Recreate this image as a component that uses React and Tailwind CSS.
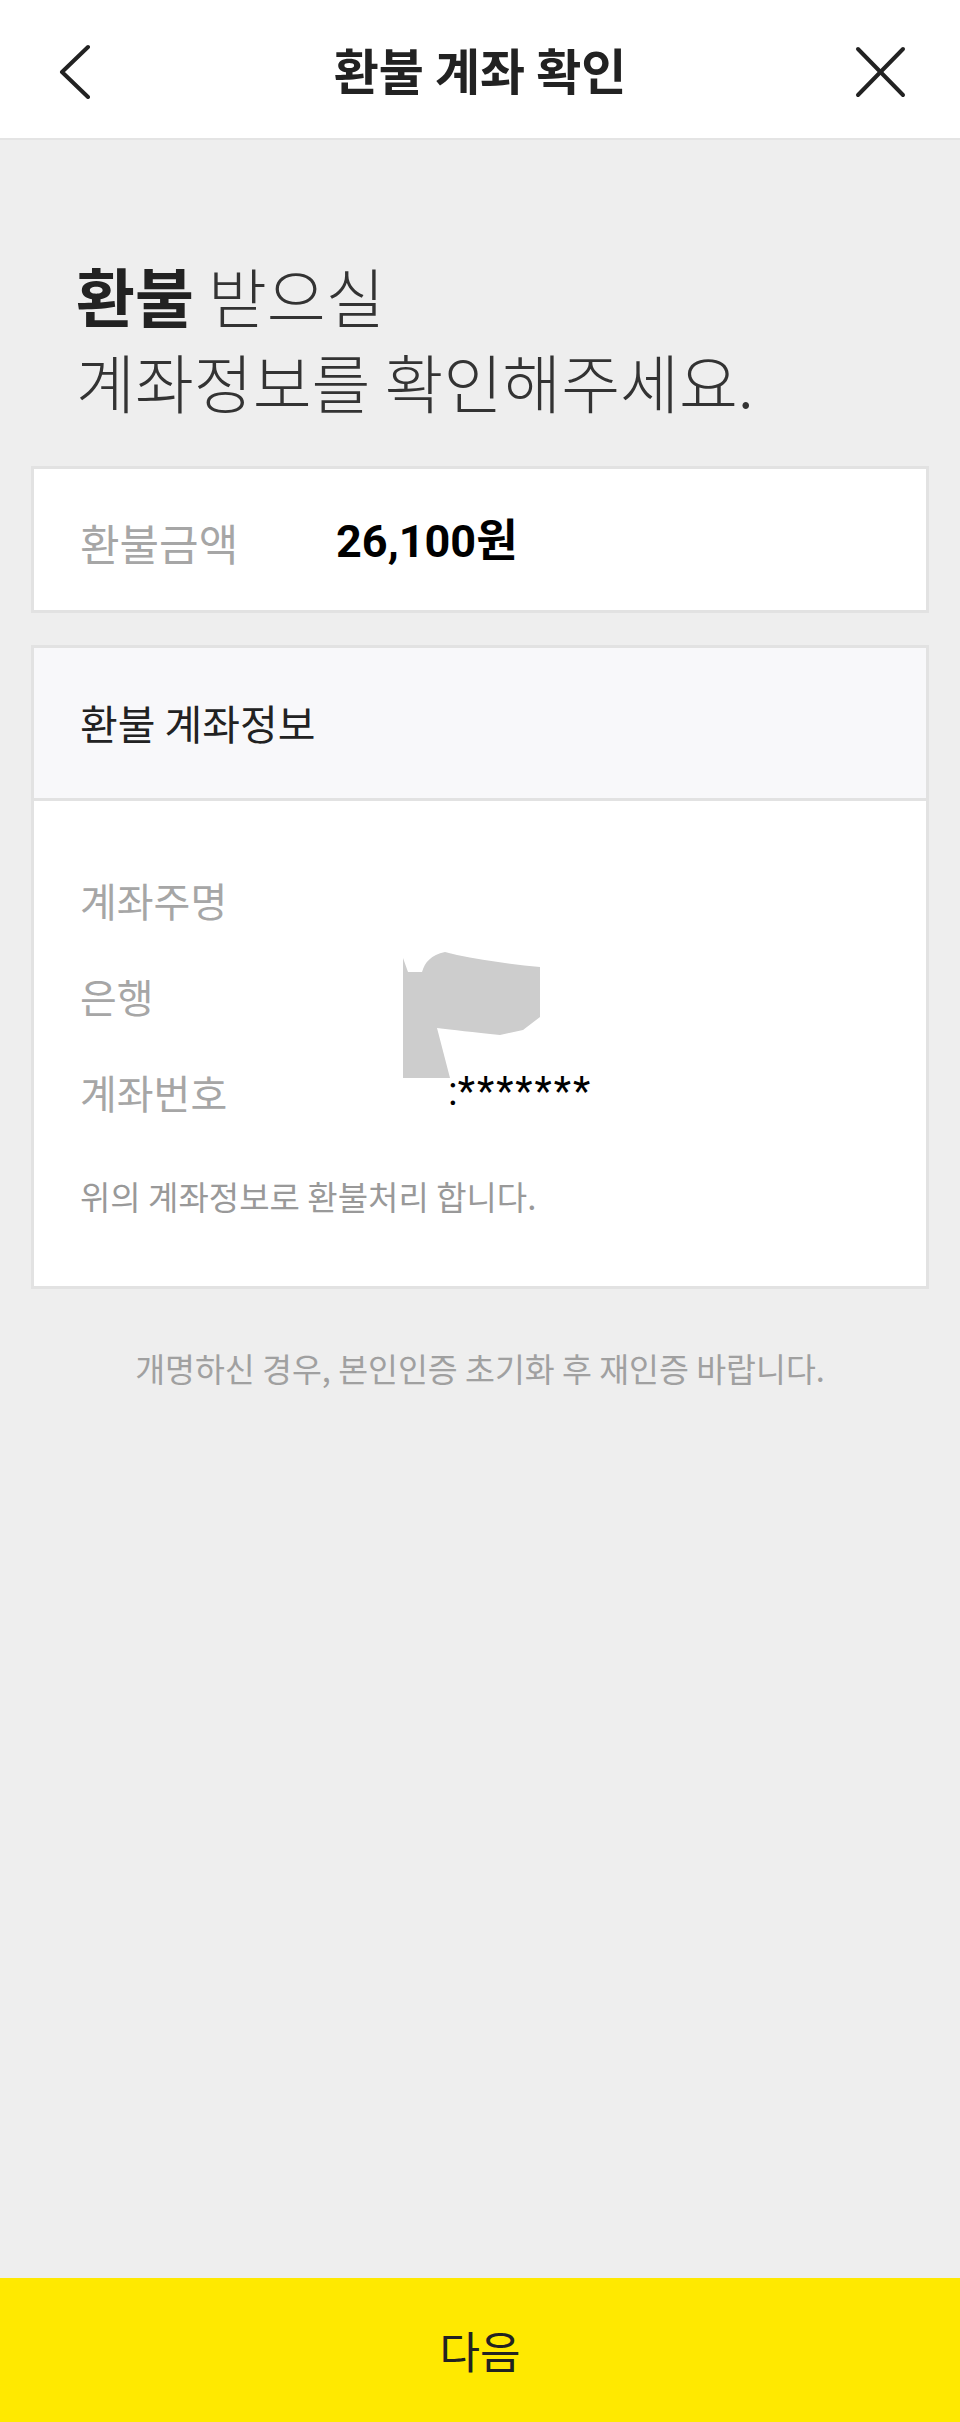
import { memo } from 'react';

const kr = "font-['Noto_Sans_CJK_KR',_'Noto_Sans',_sans-serif]";

function BackIcon() {
  return (
    <svg width="60" height="60" viewBox="0 0 60 60" fill="none" stroke="#222" strokeWidth="4" strokeLinecap="round" strokeLinejoin="round">
      <polyline points="43,8 17,33 43,58" />
    </svg>
  );
}

function CloseIcon() {
  return (
    <svg width="60" height="60" viewBox="0 0 60 60" fill="none" stroke="#222" strokeWidth="4" strokeLinecap="round">
      <line x1="3" y1="10" x2="48" y2="56" />
      <line x1="48" y1="10" x2="3" y2="56" />
    </svg>
  );
}

// redaction smudge over the account values
function Smudge() {
  return (
    <svg className="absolute left-[369px] top-[151px]" width="138" height="127" viewBox="0 0 138 127">
      <path
        d="M0 6 L5 20 L19 20 C22 10 28 3 42 0 L54 3 C80 8 110 13 137 15 L137 65 L120 78 L97 83 C70 80 50 78 34 76 L47 126 L0 126 Z"
        fill="#cdcdcd"
      />
    </svg>
  );
}

function InfoRow({ label, children }) {
  return (
    <div className="flex h-[96px] items-center">
      <span className="w-[256px] shrink-0 text-[40px] text-[#a6a6a6]">{label}</span>
      {children}
    </div>
  );
}

function RefundAccountBase() {
  return (
    <div className={`${kr} flex min-h-screen w-full flex-col bg-[#eeeeee]`}>
      <header className="flex h-[140px] items-center border-b-2 border-[#e4e4e4] bg-white px-[45px]">
        <button aria-label="뒤로">
          <BackIcon />
        </button>
        <h1 className="flex-1 text-center text-[49px] font-bold text-[#222]">환불 계좌 확인</h1>
        <button aria-label="닫기">
          <CloseIcon />
        </button>
      </header>

      <main className="flex-1">
        <h2 className="px-[76px] pt-[111px] text-[64px] font-light leading-[86px] text-[#333]">
          <span className="font-bold text-[#222]">환불</span> 받으실
          <br />
          계좌정보를 확인해주세요.
        </h2>

        <div className="mx-[31px] mt-[43px] flex h-[147px] items-center border-[3px] border-[#e2e2e2] bg-white pl-[46px] pt-[5px]">
          <span className="w-[256px] shrink-0 text-[43px] text-[#a6a6a6]">환불금액</span>
          <span className="font-['Roboto',_'Noto_Sans_CJK_KR',_sans-serif] text-[45px] font-bold text-black">26,100원</span>
        </div>

        <div className="mx-[31px] mt-[32px] border-[3px] border-[#e2e2e2] bg-white">
          <div className="flex h-[153px] items-center border-b-[3px] border-[#e2e2e2] bg-[#f8f8fa] pl-[46px]">
            <span className="text-[41px] text-[#222]">환불 계좌정보</span>
          </div>
          <div className="relative pb-[66px] pl-[46px] pt-[51px]">
            <InfoRow label="계좌주명" />
            <InfoRow label="은행" />
            <InfoRow label="계좌번호">
              <span className="pl-[112px] font-['Roboto',_sans-serif] text-[40px] text-black">
                :<span className="tracking-[2px]">*******</span>
              </span>
            </InfoRow>
            <p className="mt-[32px] text-[33px] leading-[48px] text-[#999]">위의 계좌정보로 환불처리 합니다.</p>
            <Smudge />
          </div>
        </div>

        <p className="mt-[55px] text-center text-[32.5px] leading-[48px] text-[#a0a0a0]">
          개명하신 경우, 본인인증 초기화 후 재인증 바랍니다.
        </p>
      </main>

      <button className="flex h-[144px] w-full items-center justify-center bg-[#ffe900] text-[44px] text-[#222]">
        다음
      </button>
    </div>
  );
}

const RefundAccount = memo(RefundAccountBase);

export default function App() {
  return <RefundAccount />;
}
